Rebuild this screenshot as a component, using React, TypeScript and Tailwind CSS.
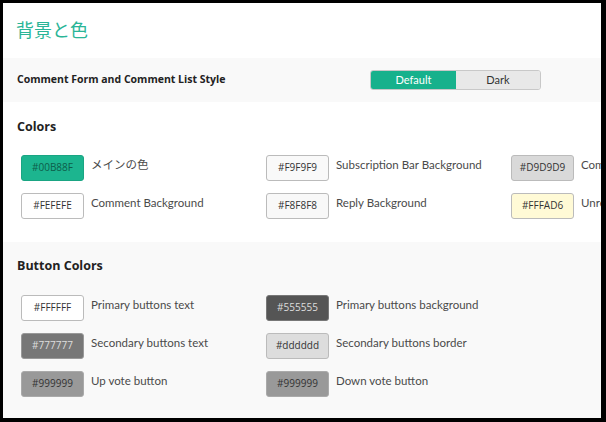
import React from "react";

type Swatch = { hex: string; label: string; bg: string; text: string; border: string };

const colors: Swatch[][] = [
  [
    { hex: "#00B88F", label: "メインの色", bg: "bg-[#1cb58f]", text: "text-[#0d5e4a]", border: "border-[#1aa583]" },
    { hex: "#FEFEFE", label: "Comment Background", bg: "bg-[#fefefe]", text: "text-[#333]", border: "border-[#bbb]" },
  ],
  [
    { hex: "#F9F9F9", label: "Subscription Bar Background", bg: "bg-[#f9f9f9]", text: "text-[#333]", border: "border-[#bbb]" },
    { hex: "#F8F8F8", label: "Reply Background", bg: "bg-[#f8f8f8]", text: "text-[#333]", border: "border-[#bbb]" },
  ],
  [
    { hex: "#D9D9D9", label: "Comment Separator Color", bg: "bg-[#d9d9d9]", text: "text-[#333]", border: "border-[#bbb]" },
    { hex: "#FFFAD6", label: "Unread Comment Background", bg: "bg-[#fffad6]", text: "text-[#333]", border: "border-[#bbb]" },
  ],
];

const buttons: Swatch[][] = [
  [
    { hex: "#FFFFFF", label: "Primary buttons text", bg: "bg-white", text: "text-[#333]", border: "border-[#bbb]" },
    { hex: "#777777", label: "Secondary buttons text", bg: "bg-[#777]", text: "text-[#ddd]", border: "border-[#999]" },
    { hex: "#999999", label: "Up vote button", bg: "bg-[#999]", text: "text-[#333]", border: "border-[#aaa]" },
  ],
  [
    { hex: "#555555", label: "Primary buttons background", bg: "bg-[#555]", text: "text-[#ddd]", border: "border-[#777]" },
    { hex: "#dddddd", label: "Secondary buttons border", bg: "bg-[#ddd]", text: "text-[#333]", border: "border-[#bbb]" },
    { hex: "#999999", label: "Down vote button", bg: "bg-[#999]", text: "text-[#333]", border: "border-[#aaa]" },
  ],
];

function Row({ s }: { s: Swatch }) {
  return (
    <div className="flex h-[26px] items-start">
      <div
        className={`flex h-[26px] w-[63px] shrink-0 items-center justify-center rounded-[3px] border text-[10px] ${s.bg} ${s.text} ${s.border}`}
      >
        {s.hex}
      </div>
      <div
        className="ml-[7px] mt-[1px] whitespace-nowrap text-[11.5px] text-[#4a4a4a]"
        style={{ fontFamily: 'Lato, "Noto Sans CJK JP", sans-serif' }}
      >
        {s.label}
      </div>
    </div>
  );
}

function Grid({ cols }: { cols: Swatch[][] }) {
  return (
    <div className="flex pl-[18px]">
      {cols.map((col, i) => (
        <div key={i} className="flex w-[245px] shrink-0 flex-col gap-[12px]">
          {col.map((s) => (
            <Row key={s.label} s={s} />
          ))}
        </div>
      ))}
    </div>
  );
}

export default function App() {
  return (
    <div
      className="h-[422px] w-[606px] overflow-hidden bg-black pb-[4px] pl-[3px] pr-[5px] pt-[3px]"
      style={{ fontFamily: '"Open Sans", "Noto Sans CJK JP", sans-serif' }}
    >
      <div className="h-full w-full overflow-hidden bg-white">
        <div className="flex h-[55px] items-center pl-[13px]">
          <h1 className="text-[18px] font-normal text-[#2ab597]">背景と色</h1>
        </div>
        <div className="flex h-[44px] items-center bg-[#f9f9f9] pl-[14px]">
          <div className="w-[353px] text-[10.5px] font-bold text-[#222]">Comment Form and Comment List Style</div>
          <div
            className="flex h-[20px] overflow-hidden rounded-[3px] border border-[#c8c8c8] text-[11px]"
            style={{ fontFamily: "Lato, sans-serif" }}
          >
            <div className="flex w-[85px] items-center justify-center bg-[#17b18c] text-white">Default</div>
            <div className="flex w-[84px] items-center justify-center bg-[#e8e8e8] text-[#333]">Dark</div>
          </div>
        </div>
        <div className="h-[140px] bg-white pt-[16px]">
          <div className="pl-[14px] text-[12.5px] font-bold text-[#222]">Colors</div>
          <div className="mt-[18px]">
            <Grid cols={colors} />
          </div>
        </div>
        <div className="h-[180px] bg-[#f9f9f9] pt-[15px]">
          <div className="pl-[14px] text-[12.5px] font-bold text-[#222]">Button Colors</div>
          <div className="mt-[19px]">
            <Grid cols={buttons} />
          </div>
        </div>
      </div>
    </div>
  );
}
